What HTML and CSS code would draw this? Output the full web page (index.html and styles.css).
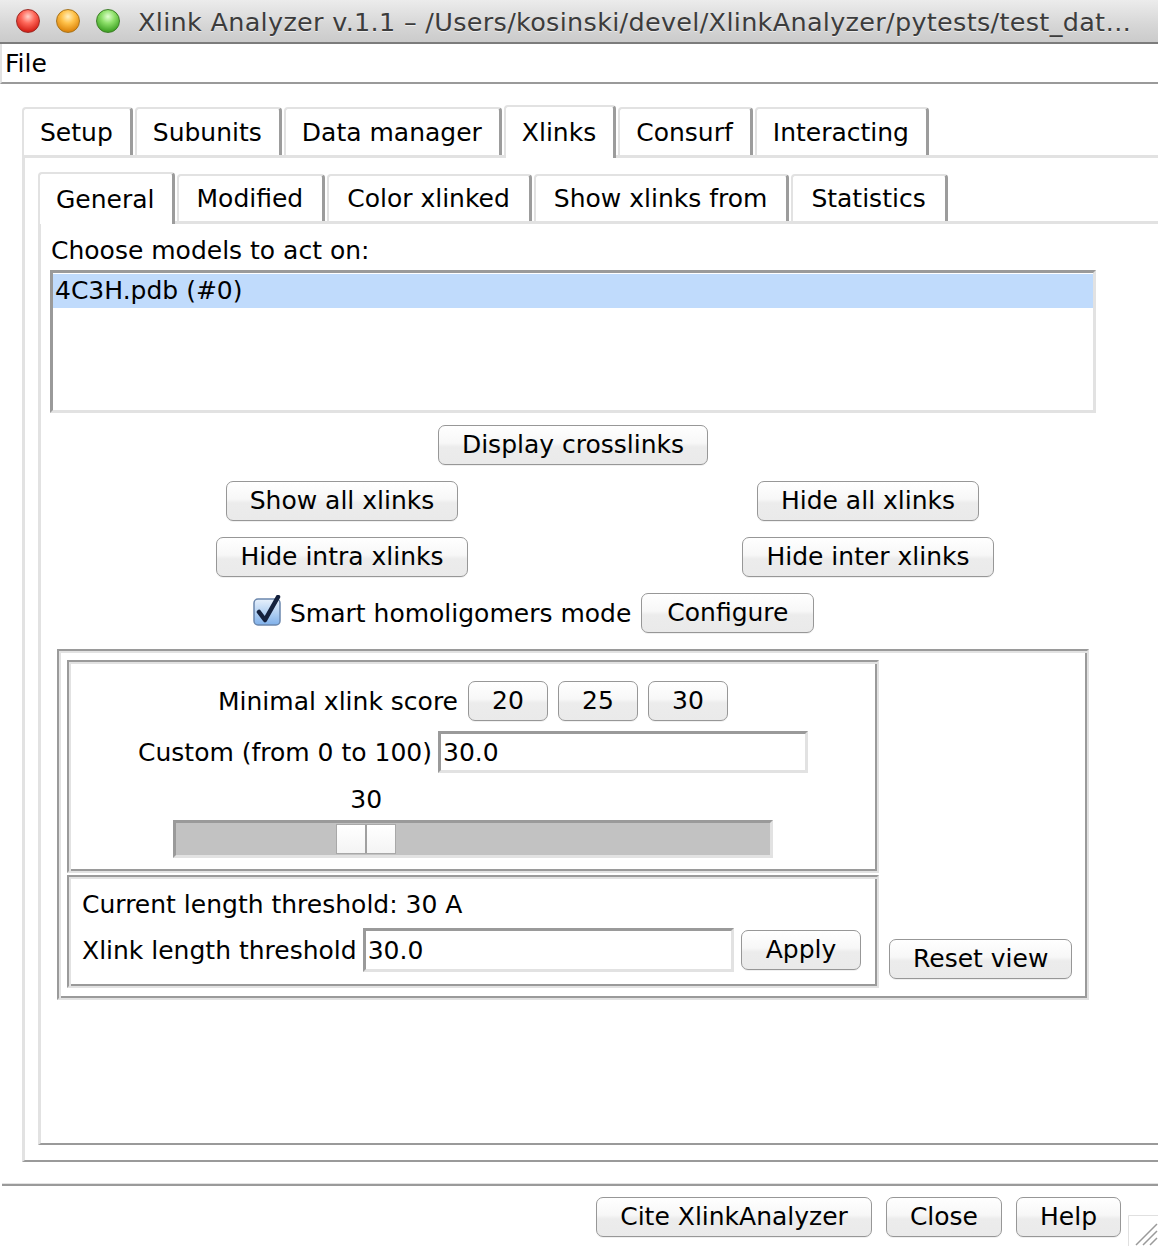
FILE: index.html
```html
<!DOCTYPE html>
<html>
<head>
<meta charset="utf-8">
<title>Xlink Analyzer</title>
<link rel="stylesheet" href="styles.css">
</head>
<body>
<div class="window">
  <div class="titlebar">
    <div class="lights">
      <span class="light red"></span>
      <span class="light yellow"></span>
      <span class="light green"></span>
    </div>
    <div class="title">Xlink Analyzer v.1.1 – /Users/kosinski/devel/XlinkAnalyzer/pytests/test_dat…</div>
  </div>
  <div class="menubar"><span class="menu">File</span></div>

  <div class="main">
    <div class="tabs outer-tabs">
      <div class="tab">Setup</div>
      <div class="tab">Subunits</div>
      <div class="tab">Data manager</div>
      <div class="tab selected">Xlinks</div>
      <div class="tab">Consurf</div>
      <div class="tab">Interacting</div>
    </div>
    <div class="panel outer-panel">
      <div class="tabs inner-tabs">
        <div class="tab selected">General</div>
        <div class="tab">Modified</div>
        <div class="tab">Color xlinked</div>
        <div class="tab">Show xlinks from</div>
        <div class="tab">Statistics</div>
      </div>
      <div class="panel inner-panel">
        <div class="label">Choose models to act on:</div>
        <div class="listbox">
          <div class="list-item selected">4C3H.pdb (#0)</div>
        </div>
        <div class="center-row"><button class="btn">Display crosslinks</button></div>
        <div class="btn-grid">
          <button class="btn">Show all xlinks</button>
          <button class="btn">Hide all xlinks</button>
          <button class="btn">Hide intra xlinks</button>
          <button class="btn">Hide inter xlinks</button>
        </div>
        <div class="check-row">
          <svg class="checkbox" width="30" height="32" viewBox="0 0 30 32">
            <defs>
              <linearGradient id="cbg" x1="0" y1="0" x2="0" y2="1">
                <stop offset="0" stop-color="#e8f1fc"/>
                <stop offset="0.5" stop-color="#b5d2f3"/>
                <stop offset="1" stop-color="#7fb0ea"/>
              </linearGradient>
            </defs>
            <rect x="1" y="4" width="26" height="26" rx="4" fill="url(#cbg)" stroke="#6b87ad" stroke-width="1.5"/>
            <path d="M6 17 L12 25 L25 2" fill="none" stroke="#14213d" stroke-width="4.5" stroke-linecap="round" stroke-linejoin="round"/>
          </svg>
          <span class="check-label">Smart homoligomers mode</span>
          <button class="btn configure">Configure</button>
        </div>
        <div class="groove">
          <div class="frames">
            <div class="frame score-frame">
              <div class="row">
                <span class="row-label">Minimal xlink score</span>
                <button class="btn score">20</button>
                <button class="btn score">25</button>
                <button class="btn score">30</button>
              </div>
              <div class="row custom-row">
                <span class="row-label">Custom (from 0 to 100)</span>
                <div class="entry entry-custom">30.0</div>
              </div>
              <div class="slider" style="--v: 30">
                <div class="slider-value">30</div>
                <div class="trough">
                  <div class="handle"><span></span><span></span></div>
                </div>
              </div>
            </div>
            <div class="frame length-frame">
              <div class="current">Current length threshold: 30 A</div>
              <div class="length-row">
                <span class="row-label">Xlink length threshold</span>
                <div class="entry entry-length">30.0</div>
                <button class="btn apply">Apply</button>
              </div>
            </div>
          </div>
          <button class="btn reset">Reset view</button>
        </div>
      </div>
    </div>
  </div>

  <div class="separator"></div>
  <div class="footer">
    <button class="btn">Cite XlinkAnalyzer</button>
    <button class="btn">Close</button>
    <button class="btn">Help</button>
  </div>
  <svg class="grip" width="30" height="31" viewBox="0 0 30 31">
    <path d="M0.5 31 V0.5 H30" fill="none" stroke="#e0e0e0" stroke-width="1"/>
    <path d="M8 30 L29 9 M15 30 L29 16 M22 30 L29 23" stroke="#9a9a9a" stroke-width="1.5"/>
  </svg>
</div>
</body>
</html>
```

FILE: styles.css
```css
html, body {
  margin: 0;
  padding: 0;
  background: #ffffff;
}

body {
  font-family: "DejaVu Sans", "Verdana", sans-serif;
  font-size: 25px;
  color: #000;
}

.window {
  position: relative;
  width: 1158px;
  height: 1246px;
  display: flex;
  flex-direction: column;
  overflow: hidden;
}

/* Title bar */
.titlebar {
  height: 42px;
  flex: none;
  display: flex;
  align-items: center;
  background: linear-gradient(to bottom, #ececec, #d6d6d6 60%, #cbcbcb);
  border-bottom: 2px solid #7c7c7c;
}

.lights {
  display: flex;
  gap: 16px;
  padding-left: 16px;
  flex: none;
}

.light {
  width: 24px;
  height: 24px;
  border-radius: 50%;
  box-sizing: border-box;
}

.light.red {
  background: radial-gradient(circle at 50% 30%, #ffd0c8 0%, #ff6a5c 35%, #d8261c 75%, #a81410 100%);
  border: 1px solid #9d2a24;
}

.light.yellow {
  background: radial-gradient(circle at 50% 30%, #fff0c0 0%, #ffc24a 35%, #e08a10 75%, #b06a08 100%);
  border: 1px solid #a8741c;
}

.light.green {
  background: radial-gradient(circle at 50% 30%, #e0ffd0 0%, #8ee06a 35%, #46a82a 75%, #2e7e18 100%);
  border: 1px solid #3d7f28;
}

.title {
  flex: 1;
  margin-left: 18px;
  padding-top: 2px;
  font-size: 25.5px;
  letter-spacing: 0.3px;
  color: #3c3c3c;
  white-space: nowrap;
  overflow: hidden;
  text-shadow: 0 1px 0 rgba(255, 255, 255, 0.6);
}

/* Menu bar */
.menubar {
  flex: none;
  box-sizing: border-box;
  height: 40px;
  padding: 2px 0 0 3px;
  line-height: 36px;
  border-bottom: 2px solid #9a9a9a;
  border-left: 2px solid #e2e2e2;
}

/* Main area */
.main {
  flex: 1;
  display: flex;
  flex-direction: column;
  padding: 21px 0 21px 22px;
  min-height: 0;
}

/* Tabs */
.tabs {
  display: flex;
  gap: 2px;
  align-items: flex-end;
  flex: none;
  position: relative;
  z-index: 2;
}

.outer-tabs {
  height: 50px;
}

.inner-tabs {
  height: 49px;
}

.tab {
  box-sizing: border-box;
  display: flex;
  align-items: center;
  padding: 0 17px 0 16px;
  border-top: 2px solid #e2e2e2;
  border-left: 2px solid #e2e2e2;
  border-right: 3px solid #9c9c9c;
  border-top-left-radius: 4px;
  border-top-right-radius: 4px;
  background: #ffffff;
  white-space: nowrap;
}

.outer-tabs .tab {
  height: 48px;
}

.outer-tabs .tab.selected {
  height: 53px;
  margin-bottom: -3px;
}

.inner-tabs .tab {
  height: 47px;
  padding: 0 19px 0 18px;
}

.inner-tabs .tab.selected {
  height: 52px;
  margin-bottom: -3px;
  padding: 0 17px 0 16px;
}

.panel {
  display: flex;
  flex-direction: column;
  border-top: 3px solid #e2e2e2;
  border-left: 3px solid #e2e2e2;
  border-bottom: 2px solid #9a9a9a;
}

.outer-panel {
  flex: 1;
  padding: 14px 0 15px 13px;
}

.inner-panel {
  flex: 1;
  padding: 12px 0 0 9px;
}

.label {
  line-height: 29px;
  padding-left: 1px;
}

.listbox {
  margin-top: 5px;
  width: 1046px;
  height: 143px;
  box-sizing: border-box;
  border: 3px solid;
  border-color: #9a9a9a #e2e2e2 #e2e2e2 #9a9a9a;
  padding-top: 1px;
  background: #fff;
}

.list-item {
  height: 34px;
  line-height: 34px;
  padding-left: 2px;
}

.list-item.selected {
  background: #c0dbfc;
}

/* Buttons */
.btn {
  font-family: inherit;
  font-size: 25px;
  color: #000;
  height: 40px;
  box-sizing: border-box;
  padding: 0 23px;
  border: 1px solid #979797;
  border-radius: 7px;
  background: linear-gradient(to bottom, #ffffff 0%, #f7f7f7 45%, #ececec 55%, #eaeaea 100%);
  box-shadow: 0 1px 0 rgba(0, 0, 0, 0.06);
  line-height: 36px;
  white-space: nowrap;
  margin: 0;
}

.center-row {
  width: 1046px;
  display: flex;
  justify-content: center;
  margin-top: 12px;
}

.btn-grid {
  display: grid;
  grid-template-columns: 526px 526px;
  justify-items: center;
  row-gap: 16px;
  margin-top: 16px;
  margin-left: 29px;
}

.check-row {
  display: flex;
  align-items: center;
  margin-top: 16px;
  padding-left: 203px;
}

.checkbox {
  flex: none;
  margin-right: 7px;
  margin-top: -4px;
}

.configure {
  margin-left: 10px;
  padding: 0 25px;
}

/* Groove container */
.groove {
  margin-top: 16px;
  margin-left: 7px;
  width: 1032px;
  box-sizing: border-box;
  border: 2px solid;
  border-color: #9a9a9a #e2e2e2 #e2e2e2 #9a9a9a;
  box-shadow: inset 2px 2px 0 #e2e2e2, inset -2px -2px 0 #9a9a9a;
  padding: 9px 0 10px 8px;
  display: flex;
  align-items: flex-end;
}

.frames {
  display: flex;
  flex-direction: column;
  gap: 2px;
  width: 812px;
  flex: none;
}

.frame {
  box-sizing: border-box;
  border: 2px solid;
  border-color: #9a9a9a #e2e2e2 #e2e2e2 #9a9a9a;
  box-shadow: inset 2px 2px 0 #e2e2e2, inset -2px -2px 0 #9a9a9a;
}

.score-frame {
  padding: 19px 0 13px 0;
}

.row {
  display: flex;
  align-items: center;
  justify-content: center;
}

.row .score {
  width: 80px;
  padding: 0;
  margin-left: 10px;
}

.custom-row {
  margin-top: 10px;
}

.entry {
  box-sizing: border-box;
  border: 3px solid;
  border-color: #9a9a9a #e2e2e2 #e2e2e2 #9a9a9a;
  background: #fff;
  padding-left: 2px;
  display: flex;
  align-items: center;
}

.entry-custom {
  width: 370px;
  height: 42px;
  margin-left: 6px;
}

.slider {
  width: 600px;
  margin: 13px auto 0;
}

.slider-value {
  width: 60px;
  text-align: center;
  line-height: 28px;
  margin-left: calc(3px + 534px * var(--v) / 100);
}

.trough {
  position: relative;
  margin-top: 6px;
  height: 38px;
  box-sizing: border-box;
  border: 3px solid;
  border-color: #9a9a9a #e2e2e2 #e2e2e2 #9a9a9a;
  background: #c2c2c2;
}

.handle {
  position: absolute;
  top: 1px;
  left: calc(534px * var(--v) / 100);
  width: 60px;
  height: 30px;
  display: flex;
  box-sizing: border-box;
  border: 1px solid #a8a8a8;
  background: #a0a0a0;
  gap: 2px;
}

.handle span {
  flex: 1;
  background: linear-gradient(to bottom, #ffffff, #f4f4f4);
}

.length-frame {
  padding: 14px 0 14px 13px;
}

.current {
  line-height: 28px;
}

.length-row {
  display: flex;
  align-items: center;
  margin-top: 9px;
}

.entry-length {
  width: 371px;
  height: 44px;
  margin-left: 6px;
}

.apply {
  margin-left: 7px;
  padding: 0 24px;
}

.reset {
  margin-left: 10px;
  margin-bottom: 9px;
}

/* Footer */
.separator {
  flex: none;
  margin-left: 2px;
  border-top: 1px solid #e2e2e2;
  border-bottom: 2px solid #9a9a9a;
}

.footer {
  flex: none;
  display: flex;
  justify-content: flex-end;
  gap: 14px;
  padding: 11px 37px 9px 0;
}

.grip {
  position: absolute;
  right: 0;
  bottom: 0;
}
```
